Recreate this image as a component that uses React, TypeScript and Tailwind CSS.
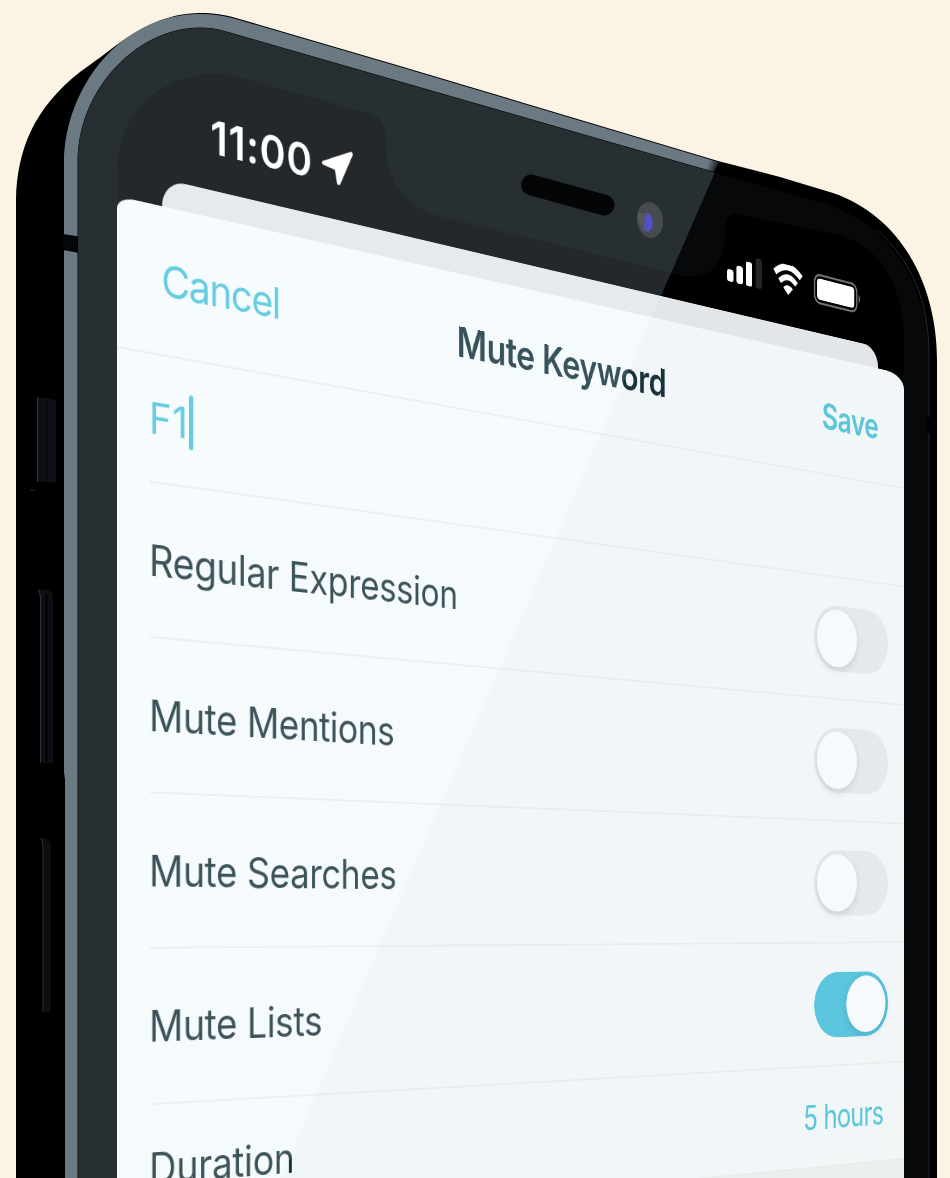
import React from 'react';

const FACE =
  'M78 1190V160C79 88 138 28 200 28C212 28 220 30 230 33L713 172L822 202C890 222 928 285 929 355V1190Z';
const DISPLAY =
  'M117.500 1190V168C118 112 164 74 213 74C224 74 232 75 242 78L360 111C378 115 385 121 386 137C385 180 404 208 443 217L667 272C704 283 723 274 725 232C726 217 728 211 742 215L838 235C885 248 903 290 904 340V1190Z';

function PhoneBody() {
  return (
    <svg className="absolute inset-0 h-[1178px] w-[950px]" viewBox="0 0 950 1178" fill="none">
      <defs>
        <linearGradient id="rim" gradientUnits="userSpaceOnUse" x1="707" y1="165" x2="720" y2="170">
          <stop stopColor="#6b7a82" />
          <stop offset="1" stopColor="#000" />
        </linearGradient>
      </defs>
      <path
        d="M16 1190V200C17 150 34 108 80 72C95 61 101 57 110 50C140 27 168 13 200 13C214 13 224 14.500 236 18L400 66L718 161L780 177L833 193C905 218 937 290 937 360V1190Z"
        fill="#000"
      />
      <path
        d="M65 1190V780L64 772V162C65 88 120 14 200 14C213 14 224 15.500 235 18.800L400 67L719 162.300L713 173L230 34C150 10 79 90 79 160V1190Z"
        fill="url(#rim)"
      />
      <path d="M63 234L79 236.500V253L63 250Z" fill="#04060a" />
      <path d={FACE} fill="#060809" stroke="#000" strokeWidth="1" />
      <path d={DISPLAY} fill="#000" />
      <path d="M877 230C913 262 928.500 302 929 355V1190" stroke="#25292b" strokeWidth="1" />
      <path d="M926 418L937 414V431L926 434Z" fill="#020203" />
      <path d="M37 397L56 400V483L37 481Z" fill="#0d1015" />
      <path d="M37.500 397V482" stroke="#30363b" />
      <path d="M47 400V481" stroke="#050608" />
      <path d="M30 490H35" stroke="#22262a" />
      <path d="M38 589Q52 589 53 595V763H40V597Z" fill="#0c0f14" />
      <path d="M38 589Q40.500 592 40.500 600V762" stroke="#31373c" />
      <path d="M46.500 593V762" stroke="#000" strokeWidth="2" />
      <path d="M41 838Q50 838 51 844V1012H43V846Z" fill="#0b0e12" />
      <path d="M41 838Q43 841 43 848V1011" stroke="#2b3035" />
    </svg>
  );
}

function Glare() {
  return (
    <svg
      className="pointer-events-none absolute inset-0 h-[1178px] w-[950px] mix-blend-screen"
      viewBox="0 0 950 1178"
      fill="none"
    >
      <clipPath id="face">
        <path d={FACE} />
      </clipPath>
      <path clipPath="url(#face)" d="M60 0H789L719 163L661 296L402 887L317 1093L282 1178H60Z" fill="#22282b" />
    </svg>
  );
}

function Sensors() {
  return (
    <svg className="pointer-events-none absolute inset-0 h-[1178px] w-[950px]" viewBox="0 0 950 1178" fill="none">
      <path d="M531.500 185L604 205" stroke="#040506" strokeWidth="21" strokeLinecap="round" />
      <ellipse cx="650" cy="220" rx="13" ry="18" transform="rotate(-8 650 220)" fill="#464b4f" />
      <path d="M638 213L646.500 213L648 229L644 232Q637 224 638 213Z" fill="#55565b" />
      <path d="M647.500 212C655 219 654 230 647 232C642 228 645 219 647.500 212Z" fill="#5450cc" />
    </svg>
  );
}

function StatusBar() {
  return (
    <div className="flex h-[168px] items-start pt-[91px] pl-[107px]">
      <span className="-mt-[1px] w-[136px] text-[48.500px] leading-[46px] font-semibold tracking-[0.018em] whitespace-nowrap text-white">
        11:00
      </span>
      <svg className="h-[40px] w-[40px]" viewBox="0 0 40 40">
        <path
          d="M3 19.500L38 2.500L22 37L19 22Z"
          fill="#fff"
          stroke="#fff"
          strokeWidth="4.500"
          strokeLinejoin="round"
        />
      </svg>
      <svg className="ml-[555px] h-[40px] w-[62px]" viewBox="0 0 62 40">
        <rect x="0" y="24" width="11" height="15" rx="3.500" fill="#fff" />
        <rect x="16" y="17" width="11" height="22" rx="3.500" fill="#fff" />
        <rect x="32" y="9" width="11" height="30" rx="3.500" fill="#fff" />
        <rect x="49" y="2" width="11" height="37" rx="3.500" fill="#242527" />
      </svg>
      <svg className="ml-[17px] h-[38px] w-[54px]" viewBox="0 0 54 38" fill="none">
        <path d="M3.500 12.500Q27 -7 50.500 12.500" stroke="#fff" strokeWidth="8" />
        <path d="M12 22.500Q27 9 42 22.500" stroke="#fff" strokeWidth="7" />
        <path d="M18.500 29.500Q27 22 35.500 29.500L27 38Z" fill="#fff" />
      </svg>
      <svg className="ml-[19px] h-[40px] w-[90px]" viewBox="0 0 90 40" fill="none">
        <rect x="1.500" y="2.500" width="78" height="36" rx="10" stroke="#77797b" strokeWidth="2.500" />
        <rect x="6" y="7" width="69" height="27" rx="5" fill="#fff" />
        <path d="M83 14Q88 20 83 27Z" fill="#77797b" />
      </svg>
    </div>
  );
}

function Toggle({ on }: { on?: boolean }) {
  return (
    <div
      className={
        on
          ? 'flex h-[84px] w-[138px] items-center justify-end rounded-full bg-[#5ac5dd] px-[5px]'
          : 'flex h-[84px] w-[138px] items-center rounded-full bg-[#e5e9eb] px-[5px]'
      }
    >
      <div className="h-[74px] w-[74px] rounded-full bg-[#f6fafc] shadow-[0_4px_12px_rgba(0,30,40,0.12)]" />
    </div>
  );
}

function Row({ label, children }: { label: string; children?: React.ReactNode }) {
  return (
    <div className="flex h-[157.300px] shrink-0 items-center justify-between pr-[31px] pl-[36px]">
      <span className="text-[43.500px] tracking-[-0.008em] whitespace-nowrap text-[#1e3338]">{label}</span>
      {children}
    </div>
  );
}

function Divider({ full }: { full?: boolean }) {
  return (
    <div className={full ? '-mt-[2px] h-[2px] shrink-0 bg-[#e8eced]' : '-mt-[2px] ml-[37px] h-[2px] shrink-0 bg-[#e8eced]'} />
  );
}

function Screen() {
  return (
    <div className="absolute top-0 left-0 flex h-[1700px] w-[1160px] origin-top-left flex-col [transform:matrix3d(0.93135,0.25845,0,0.00027974,0,1,0,0,0,0,1,0,117,0,0,1)]">
      <StatusBar />
      <div className="mr-[50px] ml-[51px] h-[27.500px] shrink-0 rounded-t-[27px] bg-[#e2e6e8]" />
      <div className="flex grow flex-col overflow-hidden [border-top-left-radius:20px_12px] [border-top-right-radius:36px_20px] [background-image:linear-gradient(117.7deg,#f5fafd_0%,#f4f9fc_36.5%,#f1f6f8_36.7%,#f1f6f7_100%)]">
        <div className="grid h-[152.500px] shrink-0 grid-cols-[1fr_auto_1fr] items-center px-[50px] text-[46px] leading-none">
          <span className="-mt-[3px] text-[45.500px] tracking-[-0.03em] text-[#4fc4db]">Cancel</span>
          <span className="font-semibold tracking-[-0.012em] text-[#18323a]">Mute Keyword</span>
          <span className="justify-self-end font-semibold tracking-[-0.02em] text-[#5ac5db]">Save</span>
        </div>
        <Divider full />
        <div className="flex h-[129.500px] shrink-0 items-center pl-[36px]">
          <span className="-mt-[2px] text-[44px] tracking-[0.01em] text-[#4fc4db]">F1</span>
          <span className="-mt-[3px] ml-[1px] h-[56px] w-[5px] rounded-full bg-[#4fc4db]" />
        </div>
        <Divider />
        <Row label="Regular Expression">
          <Toggle />
        </Row>
        <Divider />
        <Row label="Mute Mentions">
          <Toggle />
        </Row>
        <Divider />
        <Row label="Mute Searches">
          <Toggle />
        </Row>
        <Divider />
        <Row label="Mute Lists">
          <Toggle on />
        </Row>
        <Divider />
        <div className="flex h-[129px] shrink-0 items-center justify-between pr-[40px] pl-[36px] text-[43.500px]">
          <span className="tracking-[-0.004em] text-[#1e3338]">Duration</span>
          <span className="tracking-[-0.022em] text-[#5ac5db]">5 hours</span>
        </div>
        <Divider full />
        <div className="grow bg-[#eaeff0]" />
      </div>
    </div>
  );
}

export default function App() {
  return (
    <main className="relative isolate h-[1178px] w-[950px] overflow-hidden bg-[#fbf3e4] font-['Inter','Liberation_Sans',sans-serif]">
      <PhoneBody />
      <Screen />
      <Glare />
      <Sensors />
    </main>
  );
}
